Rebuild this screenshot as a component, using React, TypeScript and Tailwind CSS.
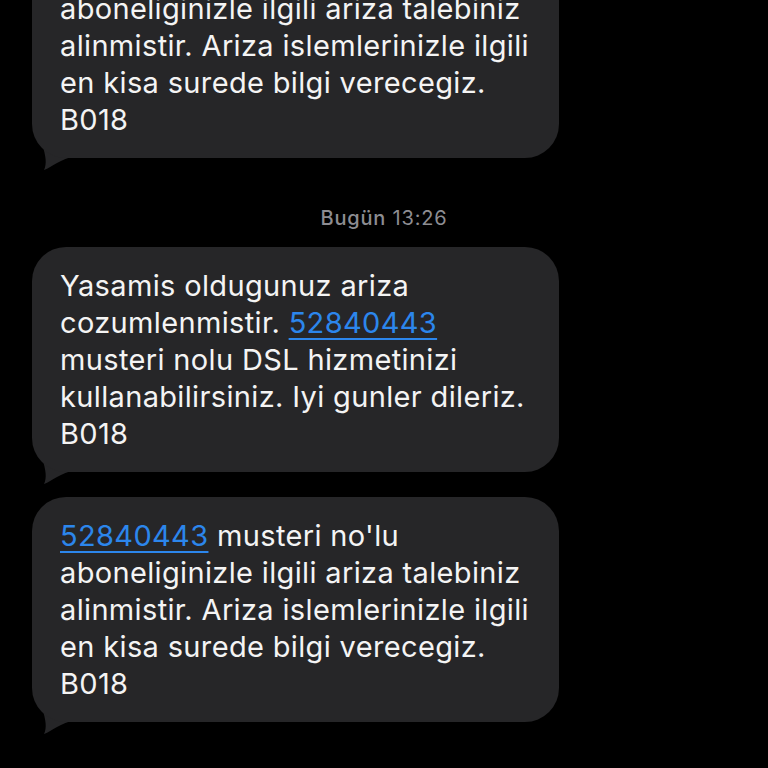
import { ReactNode } from "react";

function Link({ children }: { children: ReactNode }) {
  return (
    <span className="text-[#2c86ec] underline decoration-[2px] underline-offset-[5px]">
      {children}
    </span>
  );
}

function Bubble({ lines, className = "" }: { lines: ReactNode[]; className?: string }) {
  return (
    <div className={`relative ml-[32px] w-[527px] ${className}`}>
      {/* tail sits behind the bubble */}
      <svg
        className="absolute left-0 bottom-[-14px]"
        width="44"
        height="36"
        viewBox="0 0 44 36"
        fill="#262628"
      >
        <path d="M24 4 L10 8 C14 20 15 28 12 34 C20 31 28 23 44 20 L44 4 Z" />
      </svg>
      <div className="relative rounded-[34px] bg-[#262628] pl-[28px] pr-[20px] pt-[20px] pb-[20px] text-[29px] leading-[37px] tracking-[0.35px] text-[#f4f4f4]">
        {lines.map((l, i) => (
          <div key={i} className="whitespace-nowrap">
            {l}
          </div>
        ))}
      </div>
    </div>
  );
}

export default function App() {
  const ariza = [
    <>
      <Link>52840443</Link> musteri no'lu
    </>,
    "aboneliginizle ilgili ariza talebiniz",
    "alinmistir. Ariza islemlerinizle ilgili",
    "en kisa surede bilgi verecegiz.",
    "B018",
  ];

  return (
    <div
      className="flex h-[768px] w-[768px] flex-col overflow-hidden bg-black"
      style={{ fontFamily: "Inter, 'Noto Sans', sans-serif" }}
    >
      <Bubble className="-mt-[67px]" lines={ariza} />

      <p className="mt-[48px] text-center text-[20px] leading-[24px] tracking-[0.8px] text-[#8d8d92]">
        <span className="font-medium">Bugün</span> 13:26
      </p>

      <Bubble
        className="mt-[17px]"
        lines={[
          "Yasamis oldugunuz ariza",
          <>
            cozumlenmistir. <Link>52840443</Link>
          </>,
          "musteri nolu DSL hizmetinizi",
          "kullanabilirsiniz. Iyi gunler dileriz.",
          "B018",
        ]}
      />

      <Bubble className="mt-[25px]" lines={ariza} />
    </div>
  );
}
